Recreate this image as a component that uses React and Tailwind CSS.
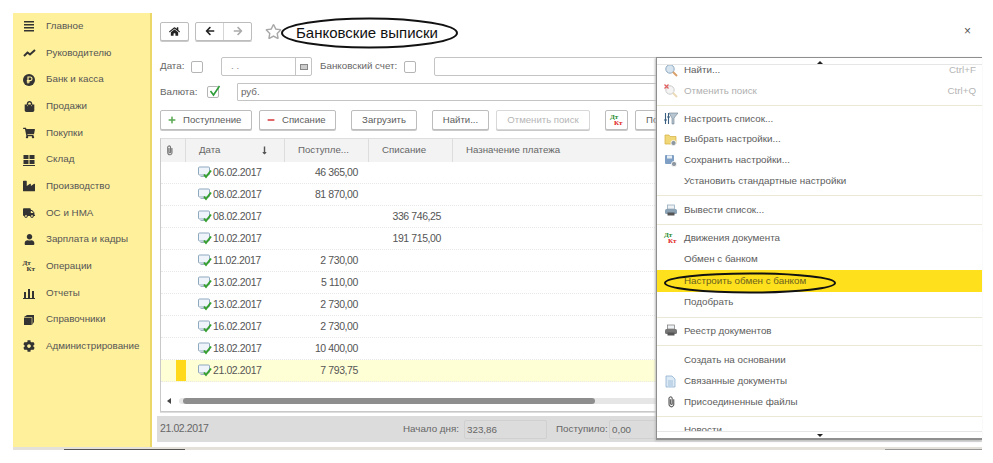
import { FaShoppingCart, FaTruck, FaUser, FaCog, FaShoppingBag, FaIndustry, FaHome, FaArrowLeft, FaArrowRight, FaPlus, FaMinus, FaPaperclip, FaRegStar, FaLongArrowAltDown } from 'react-icons/fa'

function Bars() {
  return (
    <svg width="12" height="12" viewBox="0 0 12 12" fill="#333">
      <rect x="1" y="1" width="10" height="1.5" /><rect x="1" y="4" width="10" height="1.5" />
      <rect x="1" y="7" width="10" height="1.5" /><rect x="1" y="10" width="10" height="1.5" />
    </svg>
  )
}
function Trend() {
  return (
    <svg width="13" height="12" viewBox="0 0 13 12" fill="none" stroke="#333" strokeWidth="2">
      <path d="M1 9 L4.5 5.5 L7 7.5 L12 3" />
    </svg>
  )
}
function Ruble() {
  return (
    <svg width="12" height="12" viewBox="0 0 12 12">
      <circle cx="6" cy="6" r="6" fill="#333" />
      <path d="M5 9.5V3h2.2a1.7 1.7 0 0 1 0 3.6H3.8M3.8 8h3" fill="none" stroke="#fff09b" strokeWidth="1.2" />
    </svg>
  )
}
function Blocks() {
  return (
    <svg width="12" height="12" viewBox="0 0 12 12" fill="#333">
      <rect x="0.5" y="1" width="5" height="4" /><rect x="6.5" y="1" width="5" height="4" />
      <rect x="0.5" y="6" width="5" height="4" /><rect x="6.5" y="6" width="5" height="4" />
      <rect x="0" y="11" width="12" height="1" />
    </svg>
  )
}
function Chart() {
  return (
    <svg width="12" height="12" viewBox="0 0 12 12" fill="#333">
      <rect x="1" y="5" width="2" height="6" /><rect x="5" y="2" width="2" height="9" />
      <rect x="9" y="4" width="2" height="7" /><rect x="0" y="11" width="12" height="1" />
    </svg>
  )
}
function Books() {
  return (
    <svg width="12" height="12" viewBox="0 0 12 12" fill="#333">
      <path d="M1 3l3-2h7v7l-2 3H1z" />
      <path d="M9 3.5V11M1 3.5h8" stroke="#fff09b" strokeWidth="0.6" fill="none" />
    </svg>
  )
}
function DtKt({ colored }) {
  return (
    <span className="flex flex-col w-[13px] font-['Liberation_Serif',serif] font-bold text-[7px]">
      <span className={`h-[6px] leading-[6px] ${colored ? 'text-[#1a8a2a]' : 'text-[#333]'}`}>Дт</span>
      <span className={`h-[6px] leading-[6px] pl-[4px] ${colored ? 'text-[#e02020]' : 'text-[#333]'}`}>Кт</span>
    </span>
  )
}
function DocIcon() {
  return (
    <svg width="14" height="13" viewBox="0 0 14 13" className="shrink-0">
      <rect x="0.5" y="1" width="11" height="8" rx="1" fill="#eef4fa" stroke="#8fa9bf" />
      <path d="M2.5 10.5h6" stroke="#9fb3c4" />
      <path d="M6 8.5l2 2.5L13 4.5" fill="none" stroke="#35a02d" strokeWidth="2" />
    </svg>
  )
}
function Magnifier({ cross }) {
  return (
    <svg width="14" height="14" viewBox="0 0 14 14">
      <circle cx="6" cy="6" r="4.2" fill={cross ? '#f4f4f4' : '#d6e4f0'} stroke={cross ? '#ccc' : '#8fa9bf'} />
      <path d="M9 9l4 4" stroke={cross ? '#ecd9b8' : '#d9a06a'} strokeWidth="2" />
      {cross && <path d="M0.5 0.5l4 4M4.5 0.5l-4 4" stroke="#e06060" strokeWidth="1.2" />}
    </svg>
  )
}
function FilterIcon() {
  return (
    <svg width="14" height="14" viewBox="0 0 14 14">
      <path d="M5 1h9L10 6v6H8V6z" fill="#b8c6d2" stroke="#6c7f8e" strokeWidth="0.6" />
      <path d="M1.5 1v11M4.5 1v11" stroke="#3a5f80" strokeWidth="1.1" />
      <rect x="0.5" y="7" width="2" height="2" fill="#3a5f80" />
      <rect x="3.5" y="4" width="2" height="2" fill="#3a5f80" />
    </svg>
  )
}
function Gear({ x, y }) {
  return <circle cx={x} cy={y} r="2.6" fill="#8d979f" stroke="#fff" strokeWidth="0.8" />
}
function FolderIcon() {
  return (
    <svg width="14" height="14" viewBox="0 0 14 14">
      <path d="M1 2h4l1 1.5h6V11H1z" fill="#f0d878" stroke="#d4b040" strokeWidth="0.7" />
      <Gear x={9.5} y={10} />
    </svg>
  )
}
function SaveIcon() {
  return (
    <svg width="14" height="14" viewBox="0 0 14 14">
      <rect x="1" y="1" width="9" height="9" rx="1" fill="#7fa0c4" />
      <rect x="3" y="1.5" width="5" height="3" fill="#e8eef5" />
      <Gear x={10} y={10} />
    </svg>
  )
}
function PrintIcon({ tone = '#8ba3b5' }) {
  return (
    <svg width="14" height="13" viewBox="0 0 14 13">
      <rect x="3.5" y="1" width="7" height="4" fill="#eef2f5" stroke={tone} strokeWidth="0.7" />
      <rect x="1" y="5" width="12" height="5" rx="1.5" fill={tone} />
      <rect x="3.5" y="8.5" width="7" height="3" fill="#555" />
    </svg>
  )
}
function LinkedIcon() {
  return (
    <svg width="11" height="13" viewBox="0 0 11 13">
      <path d="M1 1h6l3 3v8H1z" fill="#dceaf6" stroke="#8fb0cf" strokeWidth="0.8" />
      <path d="M3 6h5M3 8h5M3 10h5" stroke="#8fb0cf" strokeWidth="0.7" />
    </svg>
  )
}
function Btn({ children, className = '' }) {
  return (
    <div className={`h-[20px] flex items-center justify-center rounded-[2px] border border-[#bdbdbd] bg-white text-[9.6px] text-[#5c5c5c] shadow-[0_1px_0_#c9c9c9] ${className}`}>
      {children}
    </div>
  )
}
function Check({ on }) {
  return (
    <span className="relative block w-[12px] h-[12px] border border-[#b5b5b5] rounded-[2px] bg-white">
      {on && (
        <svg width="14" height="14" viewBox="0 0 14 14" className="absolute -top-[3px] left-0">
          <path d="M2.5 7l3 4L11.5 2" fill="none" stroke="#2f9e3a" strokeWidth="1.6" />
        </svg>
      )}
    </span>
  )
}

const sections = [
  ['Главное', <Bars />],
  ['Руководителю', <Trend />],
  ['Банк и касса', <Ruble />],
  ['Продажи', <FaShoppingBag size={11} color="#333" />],
  ['Покупки', <FaShoppingCart size={12} color="#333" />],
  ['Склад', <Blocks />],
  ['Производство', <FaIndustry size={12} color="#333" />],
  ['ОС и НМА', <FaTruck size={12} color="#333" />],
  ['Зарплата и кадры', <FaUser size={11} color="#333" />],
  ['Операции', <DtKt />],
  ['Отчеты', <Chart />],
  ['Справочники', <Books />],
  ['Администрирование', <FaCog size={12} color="#333" />],
]

const rows = [
  ['06.02.2017', '46 365,00', ''],
  ['08.02.2017', '81 870,00', ''],
  ['08.02.2017', '', '336 746,25'],
  ['10.02.2017', '', '191 715,00'],
  ['11.02.2017', '2 730,00', ''],
  ['13.02.2017', '5 110,00', ''],
  ['13.02.2017', '2 730,00', ''],
  ['16.02.2017', '2 730,00', ''],
  ['18.02.2017', '10 400,00', ''],
  ['21.02.2017', '7 793,75', ''],
]

function MenuItem({ label, icon, hint, muted, active, className = 'h-[20.8px]' }) {
  return (
    <div className={`flex items-center shrink-0 ${className} ${active ? 'bg-[#ffe01c]' : ''}`}>
      <span className="w-[27px] flex justify-center shrink-0">{icon}</span>
      <span className={`flex-1 whitespace-nowrap ${muted ? 'text-[#b0b0b0]' : active ? 'text-[#6a6220]' : 'text-[#5c5c5c]'}`}>{label}</span>
      {hint && <span className="pr-[6px] text-[#b5b5b5]">{hint}</span>}
    </div>
  )
}
function Sep({ className = 'my-[3px]' }) {
  return <div className={`h-px bg-[#ebe8d5] shrink-0 ${className}`} />
}

export default function App() {
  return (
    <div className="relative w-[993px] h-[463px] overflow-hidden bg-white font-['Liberation_Sans',sans-serif]">
      <div className="ml-[13px] mt-[13px] w-[969px] h-[437px] flex border-b-[3px] border-[#e4e0da]">
        {/* Left - sections */}
        <div className="w-[139px] shrink-0 bg-[#fff09b] border-r-2 border-[#ecd869]">
          {sections.map(([label, icon]) => (
            <div key={label} className="h-[26.67px] flex items-center text-[9.8px] text-[#555]">
              <span className="w-[16px] ml-[8px] flex justify-center">{icon}</span>
              <span className="ml-[9px] whitespace-nowrap">{label}</span>
            </div>
          ))}
        </div>

        {/* Main */}
        <div className="flex-1 min-w-0 flex flex-col pl-[5px]">
          <div className="h-[36px] flex items-center pl-[3px] shrink-0">
            <Btn className="w-[29px] !h-[19px] text-[#222]"><FaHome size={11} /></Btn>
            <div className="ml-[6px] w-[57px] h-[19px] flex rounded-[2px] border border-[#bdbdbd] shadow-[0_1px_0_#c9c9c9]">
              <span className="flex-1 flex items-center justify-center text-[#222] border-r border-[#d5d5d5]"><FaArrowLeft size={10} /></span>
              <span className="flex-1 flex items-center justify-center text-[#aaa]"><FaArrowRight size={10} /></span>
            </div>
            <FaRegStar size={17} color="#a8a8a8" className="ml-[13px]" />
            <span className="ml-[14px] mt-[3px] text-[15px] leading-none text-[#111] whitespace-nowrap">Банковские выписки</span>
            <span className="ml-auto mr-[11px] text-[12px] text-[#555]">×</span>
          </div>

          <div className="h-[19px] mt-[8px] flex items-center pl-[3px] text-[9.8px] text-[#666] shrink-0">
            <span className="w-[31px]">Дата:</span>
            <Check />
            <div className="ml-[18px] w-[91px] h-[19px] border border-[#c4c4c4] rounded-[2px] flex items-center">
              <span className="flex-1 pl-[9px] text-[#888]">. .</span>
              <span className="w-[16px] h-full border-l border-[#c4c4c4] flex items-center justify-center">
                <span className="w-[8px] h-[6px] bg-[#ccc] border border-[#888]" />
              </span>
            </div>
            <span className="ml-[8px]">Банковский счет:</span>
            <span className="ml-[7px]"><Check /></span>
            <div className="ml-[18px] flex-1 h-[19px] border border-[#c4c4c4] rounded-[2px]" />
          </div>

          <div className="h-[18px] mt-[7px] flex items-center pl-[3px] text-[9.8px] text-[#666] shrink-0">
            <span className="w-[47px]">Валюта:</span>
            <Check on />
            <div className="ml-[18px] flex-1 h-[18px] border border-[#c4c4c4] rounded-[1px] pl-[3px] leading-[16px]">руб.</div>
          </div>

          <div className="h-[20px] mt-[9px] flex items-center pl-[3px] shrink-0">
            <Btn className="w-[92px] !justify-start pl-[7px] gap-[7px]"><FaPlus size={8} color="#58a84f" />Поступление</Btn>
            <Btn className="ml-[7px] w-[77px] !justify-start pl-[7px] gap-[7px]"><FaMinus size={8} color="#d9343a" />Списание</Btn>
            <Btn className="ml-[15px] w-[66px]">Загрузить</Btn>
            <Btn className="ml-[15px] w-[57px]">Найти...</Btn>
            <Btn className="ml-[7px] w-[94px] !text-[#b5b5b5] !border-[#d8d8d8]">Отменить поиск</Btn>
            <Btn className="ml-[15px] w-[23px]"><DtKt colored /></Btn>
            <Btn className="ml-[7px] w-[40px] !justify-start pl-[10px]">По</Btn>
          </div>

          {/* Table */}
          <div className="mt-[8px] h-[274px] ml-[3px] border border-[#c9c9c9] border-t-[#ddd] shadow-[0_1px_0_#ddd] flex flex-col shrink-0 text-[9.7px]">
            <div className="h-[23px] flex items-center bg-[#f3f3f3] text-[#666] shrink-0">
              <span className="w-[25px] h-full flex items-center pl-[4px] border-r border-[#ddd]"><FaPaperclip size={9} color="#777" className="-rotate-45" /></span>
              <span className="w-[99px] h-full flex items-center justify-between pl-[13px] pr-[15px] border-r border-[#ddd]">Дата<FaLongArrowAltDown size={9} color="#555" /></span>
              <span className="w-[84px] h-full flex items-center pl-[13px] border-r border-[#ddd]">Поступле...</span>
              <span className="w-[84px] h-full flex items-center pl-[13px] border-r border-[#ddd]">Списание</span>
              <span className="flex-1 pl-[13px]">Назначение платежа</span>
            </div>
            {rows.map(([date, income, spend], i) => {
              const last = i === rows.length - 1
              return (
                <div key={i} className={`h-[22px] flex items-center text-[10.5px] tracking-[-0.4px] text-[#555] border-b border-dotted border-[#e8e8e8] shrink-0 ${last ? 'bg-[#ffffd5]' : ''}`}>
                  <span className="w-[25px] h-full flex justify-end">
                    {last && <span className="w-[10px] h-full bg-[#ffd91a]" />}
                  </span>
                  <span className="w-[99px] pl-[12px] flex items-center gap-[1px]"><DocIcon />{date}</span>
                  <span className="w-[84px] text-right pr-[11px]">{income}</span>
                  <span className="w-[84px] text-right pr-[12px]">{spend}</span>
                </div>
              )
            })}
            <div className="mt-auto h-[16px] mb-[2px] flex items-center pl-[6px] shrink-0">
              <span className="w-0 h-0 border-y-[3px] border-y-transparent border-r-[4px] border-r-[#444]" />
              <div className="ml-[8px] flex-1 h-[6px] rounded-full bg-[#e6e6e6]">
                <div className="ml-[4px] w-[412px] h-full rounded-full bg-[#8e8e8e]" />
              </div>
            </div>
          </div>

          {/* Status */}
          <div className="mt-[4px] h-[26px] bg-[#dcdcdc] flex items-center pl-[3px] text-[9.8px] text-[#666] shrink-0">
            <span className="w-[243px] text-[10.5px] tracking-[-0.4px]">21.02.2017</span>
            <span className="w-[61px]">Начало дня:</span>
            <span className="w-[83px] h-[19px] leading-[17px] pl-[2px] border border-[#d0d0d0] rounded-[2px]">323,86</span>
            <span className="ml-[9px] w-[53px]">Поступило:</span>
            <span className="w-[60px] h-[19px] leading-[17px] pl-[2px] border border-[#d0d0d0] rounded-[2px]">0,00</span>
          </div>
        </div>
      </div>

      {/* Context menu */}
      <div className="absolute left-[656px] top-[57px] w-[326px] h-[383px] pt-[2px] bg-white border-l border-t border-b-2 border-[#8f8f8f] border-r-0 shadow-[-1px_1px_2px_#bbb] flex flex-col overflow-hidden text-[9.8px]">
        <div className="absolute left-0 right-0 top-0 h-[7px] z-10 bg-white flex justify-center border-b border-[#e6e6e6]">
          <span className="mt-[3px] w-0 h-0 border-x-[3px] border-x-transparent border-b-[3px] border-b-[#222]" />
        </div>
        <MenuItem label="Найти..." icon={<Magnifier />} hint="Ctrl+F" />
        <MenuItem label="Отменить поиск" muted icon={<Magnifier cross />} hint="Ctrl+Q" />
        <Sep />
        <MenuItem label="Настроить список..." icon={<FilterIcon />} />
        <MenuItem label="Выбрать настройки..." icon={<FolderIcon />} />
        <MenuItem label="Сохранить настройки..." icon={<SaveIcon />} />
        <MenuItem label="Установить стандартные настройки" />
        <Sep className="my-[3.5px]" />
        <MenuItem label="Вывести список..." icon={<PrintIcon />} />
        <Sep />
        <MenuItem label="Движения документа" icon={<DtKt colored />} />
        <MenuItem label="Обмен с банком" className="h-[21.6px]" />
        <MenuItem label="Настроить обмен с банком" active className="h-[22px]" />
        <MenuItem label="Подобрать" className="h-[21.6px]" />
        <Sep />
        <MenuItem label="Реестр документов" icon={<PrintIcon tone="#777" />} />
        <Sep className="my-[4px]" />
        <MenuItem label="Создать на основании" />
        <MenuItem label="Связанные документы" icon={<LinkedIcon />} />
        <MenuItem label="Присоединенные файлы" icon={<FaPaperclip size={10} color="#666" className="-rotate-45" />} />
        <Sep />
        <MenuItem label="Новости" />
        <div className="absolute left-0 right-0 bottom-0 h-[7px] bg-white border-t border-[#e6e6e6] flex justify-center">
          <span className="mt-[2px] w-0 h-0 border-x-[3px] border-x-transparent border-t-[3px] border-t-[#222]" />
        </div>
      </div>

      {/* Hand-drawn ellipses over the page */}
      <svg width="993" height="463" className="absolute inset-0 pointer-events-none" fill="none" stroke="#111">
        <ellipse cx="369.5" cy="33" rx="87.5" ry="14.5" strokeWidth="2" />
        <ellipse cx="750" cy="283" rx="85" ry="9.5" strokeWidth="2" />
      </svg>

      {/* Scraps of the window behind, at the bottom edge */}
      <div className="absolute left-[64px] top-[449px] w-[121px] h-px bg-[#555]" />
      <div className="absolute left-[885px] top-[449px] w-[97px] h-px bg-[#999]" />
    </div>
  )
}
